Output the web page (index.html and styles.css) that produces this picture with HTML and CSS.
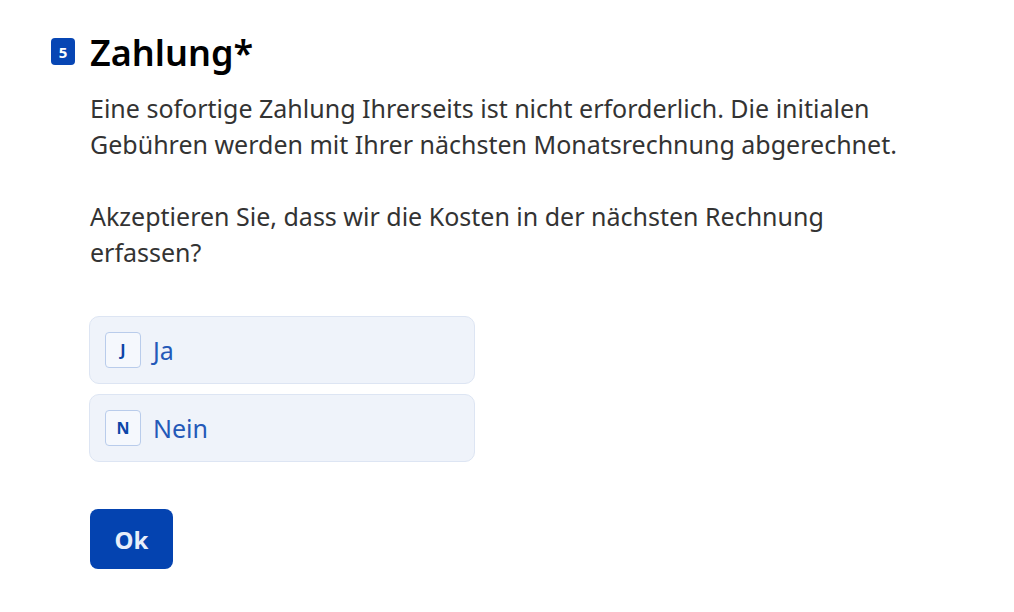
FILE: index.html
```html
<!DOCTYPE html>
<html lang="de">
<head>
<meta charset="utf-8">
<title>Zahlung</title>
<link rel="stylesheet" href="styles.css">
</head>
<body>
<main class="question">
  <div class="head">
    <span class="num">5</span>
    <h1 class="title">Zahlung*</h1>
  </div>
  <div class="body">
    <p class="text">Eine sofortige Zahlung Ihrerseits ist nicht erforderlich. Die initialen Gebühren werden mit Ihrer nächsten Monatsrechnung abgerechnet.</p>
    <p class="text">Akzeptieren Sie, dass wir die Kosten in der nächsten Rechnung erfassen?</p>
    <div class="options">
      <div class="option"><span class="key">J</span><span class="label">Ja</span></div>
      <div class="option"><span class="key">N</span><span class="label">Nein</span></div>
    </div>
    <button class="ok">Ok</button>
  </div>
</main>
</body>
</html>
```
FILE: styles.css
```css
html, body {
  margin: 0;
  padding: 0;
  background: #ffffff;
}
body {
  font-family: "Noto Sans", "Open Sans", sans-serif;
  color: #333333;
}
.question {
  padding: 30px 0 0 51px;
}
.head {
  display: flex;
  align-items: flex-start;
  gap: 15px;
  height: 46px;
}
.num {
  margin-top: 8px;
  width: 24px;
  height: 27px;
  border-radius: 4px;
  background: #0746b4;
  color: #ffffff;
  font-size: 15px;
  font-weight: 700;
  display: flex;
  align-items: center;
  justify-content: center;
}
.title {
  margin: 0;
  font-size: 36px;
  font-weight: 600;
  color: #000000;
  line-height: 46px;
}
.body {
  padding-left: 39px;
  padding-top: 14px;
}
.text {
  margin: 0 0 36px 0;
  font-size: 25px;
  line-height: 36px;
  width: 830px;
  color: #333333;
}
.options {
  display: flex;
  flex-direction: column;
  gap: 10px;
  width: 386px;
  margin-left: -1px;
  margin-top: 46px;
}
.option {
  height: 68px;
  box-sizing: border-box;
  border: 1px solid #dde5f3;
  border-radius: 10px;
  background: #eff3fa;
  display: flex;
  align-items: center;
  padding-left: 15px;
  gap: 12px;
}
.key {
  width: 36px;
  height: 36px;
  box-sizing: border-box;
  border: 1px solid #b9cceb;
  border-radius: 4px;
  background: #f5f8fd;
  color: #0c45a8;
  font-size: 16px;
  font-weight: 700;
  display: flex;
  align-items: center;
  justify-content: center;
}
.label {
  font-size: 25px;
  color: #2459b8;
}
.ok {
  margin-top: 47px;
  width: 83px;
  height: 60px;
  border: none;
  border-radius: 8px;
  background: #0443b0;
  color: #e8eefa;
  font-family: "Noto Sans", "Open Sans", sans-serif;
  font-size: 24px;
  font-weight: 700;
  padding: 0;
}
```
